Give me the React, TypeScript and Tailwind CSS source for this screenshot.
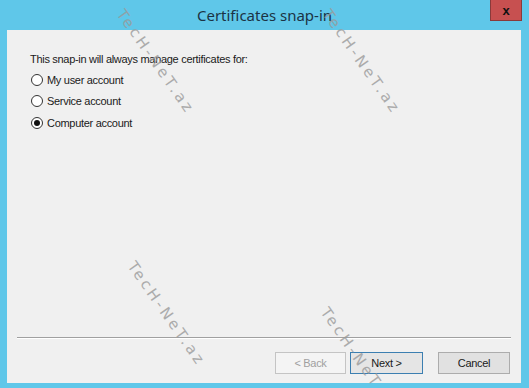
import React from "react";

function Radio({ checked, label }: { checked?: boolean; label: string }) {
  return (
    <label className="flex items-center gap-[4px] h-[21.5px]">
      <span className="w-[12px] h-[12px] rounded-full border border-[#333] bg-white flex items-center justify-center">
        {checked && <span className="w-[6px] h-[6px] rounded-full bg-[#111]" />}
      </span>
      <span>{label}</span>
    </label>
  );
}

function Watermark({ className }: { className: string }) {
  return (
    <div
      className={`absolute pointer-events-none select-none text-[#9a9a9a] text-[15px] tracking-[3px] font-['DejaVu_Sans',sans-serif] rotate-[55deg] origin-left opacity-80 ${className}`}
    >
      TecH-NeT.az
    </div>
  );
}

export default function App() {
  return (
    <div className="relative w-[529px] h-[388px] bg-[#5fc7e9] overflow-hidden font-['Liberation_Sans',Arial,sans-serif] text-[#1a1a1a] flex flex-col">
      {/* Title bar */}
      <div className="h-[30px] flex items-start justify-center relative shrink-0">
        <span className="mt-[6px] text-[15px] text-[#1b3344] font-['Noto_Sans',sans-serif] leading-[18px]">
          Certificates snap-in
        </span>
        <button className="absolute right-[7px] top-0 w-[32px] h-[21px] bg-[#c75050] border border-[#8a3a3a] border-t-0 flex items-center justify-center text-[#111] font-bold text-[13px] leading-none">
          x
        </button>
      </div>

      {/* Client area */}
      <div className="ml-[7px] mr-[8px] h-[353px] bg-[#f0f0f0] flex flex-col text-[11px] tracking-[-0.3px]">
        <div className="pl-[23px] pt-[22px] flex-1">
          <p className="leading-[14px] mb-[3px]">This snap-in will always manage certificates for:</p>
          <div className="pl-[1px] flex flex-col">
            <Radio label="My user account" />
            <Radio label="Service account" />
            <Radio checked label="Computer account" />
          </div>
        </div>
        <div className="mx-[10px] border-t border-[#a0a0a0] border-b border-b-white" />
        <div className="flex justify-end gap-[4px] pr-[11px] pt-[13px] pb-[9px]">
          <button className="w-[71px] h-[22px] border border-[#c4c4c4] bg-[#f4f4f4] text-[#a0a0a0]">
            &lt; Back
          </button>
          <button className="w-[73px] h-[22px] border border-[#3c7fb1] bg-[#e5e5e5] text-[#1a1a1a] mr-[11px]">
            Next &gt;
          </button>
          <button className="w-[72px] h-[22px] border border-[#acacac] bg-[#e1e1e1] text-[#1a1a1a]">
            Cancel
          </button>
        </div>
      </div>

      <Watermark className="left-[120px] top-[0px]" />
      <Watermark className="left-[326px] top-[0px]" />
      <Watermark className="left-[131px] top-[252px]" />
      <Watermark className="left-[324px] top-[298px]" />
    </div>
  );
}
